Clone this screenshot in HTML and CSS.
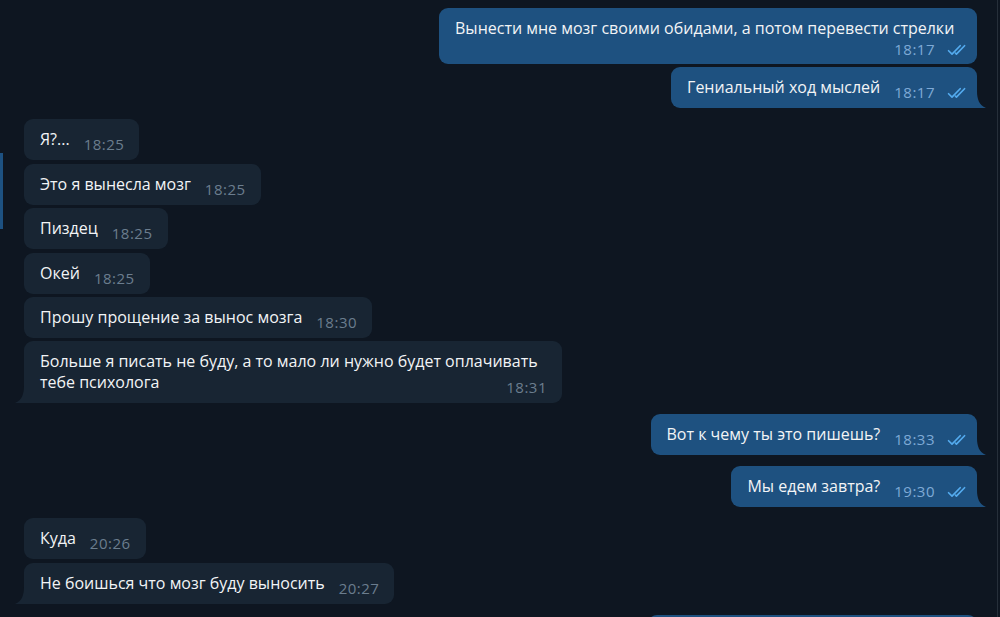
FILE: index.html
```html
<!DOCTYPE html>
<html lang="ru">
<head>
<meta charset="utf-8">
<title>Chat</title>
<link rel="stylesheet" href="styles.css">
</head>
<body>
<div class="chat">
  <div class="scroll-mark"></div>

  <div class="group out first">
    <div class="bubble wrapped">Вынести мне мозг своими обидами, а потом перевести стрелки <span class="meta"><span class="time">18:17</span><svg class="ticks" viewBox="0 0 22 11"><path d="M1.5 6.2 L4.8 9.4 L12.6 1.4"/><path d="M8 8.4 L9 9.4 L16.8 1.4"/></svg></span></div>
    <div class="bubble tail">Гениальный ход мыслей <span class="meta"><span class="time">18:17</span><svg class="ticks" viewBox="0 0 22 11"><path d="M1.5 6.2 L4.8 9.4 L12.6 1.4"/><path d="M8 8.4 L9 9.4 L16.8 1.4"/></svg></span><svg class="tail-shape" viewBox="0 0 9 17"><path d="M0 0 C0 8 2 14 9 17 L0 17 Z"/></svg></div>
  </div>

  <div class="group in">
    <div class="bubble">Я?... <span class="meta"><span class="time">18:25</span></span></div>
    <div class="bubble">Это я вынесла мозг <span class="meta"><span class="time">18:25</span></span></div>
    <div class="bubble">Пиздец <span class="meta"><span class="time">18:25</span></span></div>
    <div class="bubble">Окей <span class="meta"><span class="time">18:25</span></span></div>
    <div class="bubble">Прошу прощение за вынос мозга <span class="meta"><span class="time">18:30</span></span></div>
    <div class="bubble tail">Больше я писать не буду, а то мало ли нужно будет оплачивать тебе психолога <span class="meta"><span class="time">18:31</span></span><svg class="tail-shape" viewBox="0 0 9 17"><path d="M9 0 C9 8 7 14 0 17 L9 17 Z"/></svg></div>
  </div>

  <div class="group out">
    <div class="bubble tail">Вот к чему ты это пишешь? <span class="meta"><span class="time">18:33</span><svg class="ticks" viewBox="0 0 22 11"><path d="M1.5 6.2 L4.8 9.4 L12.6 1.4"/><path d="M8 8.4 L9 9.4 L16.8 1.4"/></svg></span><svg class="tail-shape" viewBox="0 0 9 17"><path d="M0 0 C0 8 2 14 9 17 L0 17 Z"/></svg></div>
  </div>

  <div class="group out">
    <div class="bubble tail">Мы едем завтра? <span class="meta"><span class="time">19:30</span><svg class="ticks" viewBox="0 0 22 11"><path d="M1.5 6.2 L4.8 9.4 L12.6 1.4"/><path d="M8 8.4 L9 9.4 L16.8 1.4"/></svg></span><svg class="tail-shape" viewBox="0 0 9 17"><path d="M0 0 C0 8 2 14 9 17 L0 17 Z"/></svg></div>
  </div>

  <div class="group in">
    <div class="bubble">Куда <span class="meta"><span class="time">20:26</span></span></div>
    <div class="bubble tail">Не боишься что мозг буду выносить <span class="meta"><span class="time">20:27</span></span><svg class="tail-shape" viewBox="0 0 9 17"><path d="M9 0 C9 8 7 14 0 17 L9 17 Z"/></svg></div>
  </div>

  <div class="group out">
    <div class="bubble">Нет, я просто хотела узнать <span class="meta"><span class="time">20:31</span><svg class="ticks" viewBox="0 0 22 11"><path d="M1.5 6.2 L4.8 9.4 L12.6 1.4"/><path d="M8 8.4 L9 9.4 L16.8 1.4"/></svg></span></div>
  </div>
</div>
</body>
</html>
```

FILE: styles.css
```css
html, body {
  margin: 0;
  padding: 0;
  height: 100%;
  background: #0e1621;
  overflow: hidden;
}

body {
  font-family: "Open Sans", "Noto Sans", sans-serif;
  font-size: 16px;
  color: #f2f4f6;
}

.chat {
  position: relative;
  height: 100%;
  margin-right: 2px;
  border-right: 1px solid #262f3a;
  padding: 8px 20px 0 24px;
  box-sizing: border-box;
  display: flex;
  flex-direction: column;
}

.scroll-mark {
  position: absolute;
  left: 0;
  top: 153px;
  width: 3px;
  height: 76px;
  background: #1d5181;
}

.group {
  display: flex;
  flex-direction: column;
  gap: 3.4px;
  margin-top: 11px;
}

.group.first {
  margin-top: 0;
}

.group.in {
  align-items: flex-start;
}

.group.out {
  align-items: flex-end;
}

.bubble {
  position: relative;
  display: flow-root;
  box-sizing: border-box;
  max-width: 538px;
  padding: 10px 15px 10px 16px;
  line-height: 21px;
  border-radius: 9px;
}

.in .bubble {
  background: #182533;
}

.out .bubble {
  background: #1e5180;
  padding-right: 7px;
}

.meta {
  float: right;
  position: relative;
  top: 8px;
  margin-left: 14px;
  line-height: 15px;
  font-size: 15px;
  letter-spacing: 0.5px;
  display: flex;
  align-items: center;
  gap: 12px;
}

.in .time {
  color: #6b7d8e;
}

.out .time {
  color: #7eaad6;
}

.wrapped .meta {
  top: 3px;
}

.ticks {
  width: 23px;
  height: 12px;
  fill: none;
  stroke: #54abee;
  stroke-width: 1.6;
  stroke-linecap: round;
  stroke-linejoin: round;
}

.tail-shape {
  position: absolute;
  bottom: 0;
  width: 9px;
  height: 17px;
}

.in .bubble.tail {
  border-bottom-left-radius: 0;
}

.out .bubble.tail {
  border-bottom-right-radius: 0;
}

.in .tail-shape {
  left: -9px;
  fill: #182533;
}

.out .tail-shape {
  right: -9px;
  fill: #1e5180;
}
```
